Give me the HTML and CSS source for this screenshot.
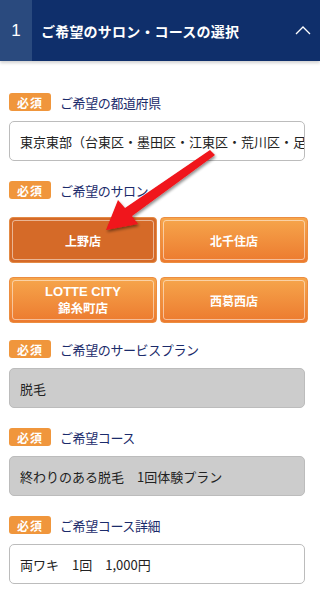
FILE: index.html
```html
<!DOCTYPE html>
<html lang="ja">
<head>
<meta charset="utf-8">
<link rel="stylesheet" href="styles.css">
</head>
<body>
<header class="step-head">
  <div class="step-num">1</div>
  <div class="step-title">ご希望のサロン・コースの選択</div>
  <svg class="chev" width="16" height="10" viewBox="0 0 16 10"><path d="M1 9 L8 2 L15 9" fill="none" stroke="#fff" stroke-width="1.3"/></svg>
</header>
<main class="form">
  <section class="field">
    <div class="label"><span class="req">必須</span><span class="ltext">ご希望の都道府県</span></div>
    <div class="box">東京東部（台東区・墨田区・江東区・荒川区・足立区・葛飾区・江戸川区）</div>
  </section>
  <section class="field">
    <div class="label"><span class="req">必須</span><span class="ltext">ご希望のサロン</span></div>
    <div class="salons">
      <div class="salon selected">上野店</div>
      <div class="salon">北千住店</div>
      <div class="salon"><span class="two"><span class="en">LOTTE CITY</span><span class="jp">錦糸町店</span></span></div>
      <div class="salon">西葛西店</div>
    </div>
  </section>
  <section class="field">
    <div class="label"><span class="req">必須</span><span class="ltext">ご希望のサービスプラン</span></div>
    <div class="box grey">脱毛</div>
  </section>
  <section class="field">
    <div class="label"><span class="req">必須</span><span class="ltext">ご希望コース</span></div>
    <div class="box grey">終わりのある脱毛　1回体験プラン</div>
  </section>
  <section class="field">
    <div class="label"><span class="req">必須</span><span class="ltext">ご希望コース詳細</span></div>
    <div class="box">両ワキ　1回　1,000円</div>
  </section>
</main>
<svg class="arrow" width="320" height="589" viewBox="0 0 320 589">
  <defs>
    <filter id="sh" x="-20%" y="-20%" width="140%" height="140%">
      <feGaussianBlur in="SourceAlpha" stdDeviation="1.5"/>
      <feOffset dx="1" dy="2"/>
      <feComponentTransfer><feFuncA type="linear" slope="0.45"/></feComponentTransfer>
      <feMerge><feMergeNode/><feMergeNode in="SourceGraphic"/></feMerge>
    </filter>
  </defs>
  <path d="M210 150 L215 155 L132 216 L138 224 L106 230 L118 200 L125 208 Z" fill="#f0141a" filter="url(#sh)"/>
</svg>
</body>
</html>
```
FILE: styles.css
```css
* { box-sizing: border-box; }
html, body { margin: 0; padding: 0; background: #fff; }
body {
  width: 320px;
  font-family: "Noto Sans CJK JP", "Noto Sans", sans-serif;
  position: relative;
}
.step-head {
  height: 61px;
  background: #0f2f6b;
  display: flex;
  align-items: center;
  color: #fff;
  box-shadow: 0 2px 3px rgba(0,0,0,0.18);
  position: relative;
  z-index: 1;
}
.step-num {
  width: 32px;
  height: 100%;
  background: #2a4a7e;
  display: flex;
  align-items: center;
  justify-content: center;
  font-family: "Liberation Sans", sans-serif;
  font-size: 17px;
}
.step-title {
  flex: 1;
  padding-left: 9px;
  font-size: 14px;
  font-weight: bold;
  letter-spacing: 0.2px;
}
.chev { margin-right: 9px; margin-top: -2px; }
.form { padding: 32px 15px 0 9px; }
.field { margin-bottom: 20px; }
.label {
  display: flex;
  align-items: center;
  height: 18px;
  margin-bottom: 10px;
}
.req {
  width: 42px;
  height: 18px;
  background: #f0963c;
  color: #fff;
  border-radius: 3px;
  font-size: 12px;
  font-weight: bold;
  display: flex;
  align-items: center;
  justify-content: center;
  letter-spacing: 1px;
}
.ltext {
  margin-left: 9px;
  font-size: 13px;
  color: #1b2b6b;
  letter-spacing: -0.4px;
}
.box {
  height: 40px;
  border: 1px solid #bcbcbc;
  border-radius: 5px;
  padding: 0 10px;
  display: flex;
  align-items: center;
  font-size: 13px;
  color: #222;
  white-space: nowrap;
  overflow: hidden;
}
.box.grey { background: #cccccc; }
.salons {
  display: grid;
  grid-template-columns: 148px 148px;
  column-gap: 3px;
  row-gap: 14px;
  margin-top: 18px;
  margin-bottom: -3px;
}
.salon {
  position: relative;
  height: 46px;
  border: 1px solid #ec8d40;
  border-radius: 4px;
  background: linear-gradient(#f6a64c, #ec7a2f);
  color: #fff;
  font-weight: bold;
  font-size: 12px;
  text-align: center;
  display: flex;
  align-items: center;
  justify-content: center;
}
.salon .two {
  display: flex;
  flex-direction: column;
  align-items: center;
}
.salon .en {
  font-family: "Liberation Sans", sans-serif;
  font-size: 13px;
  line-height: 15px;
}
.salon .jp {
  font-size: 12.5px;
  line-height: 18px;
}
.salon::before {
  content: "";
  position: absolute;
  inset: 2px;
  border: 1px solid rgba(255,255,255,0.5);
  border-radius: 3px;
}
.salon.selected {
  background: #d56a28;
  border-color: #e38a45;
}
.arrow {
  position: absolute;
  left: 0;
  top: 0;
  pointer-events: none;
  z-index: 2;
}
```
